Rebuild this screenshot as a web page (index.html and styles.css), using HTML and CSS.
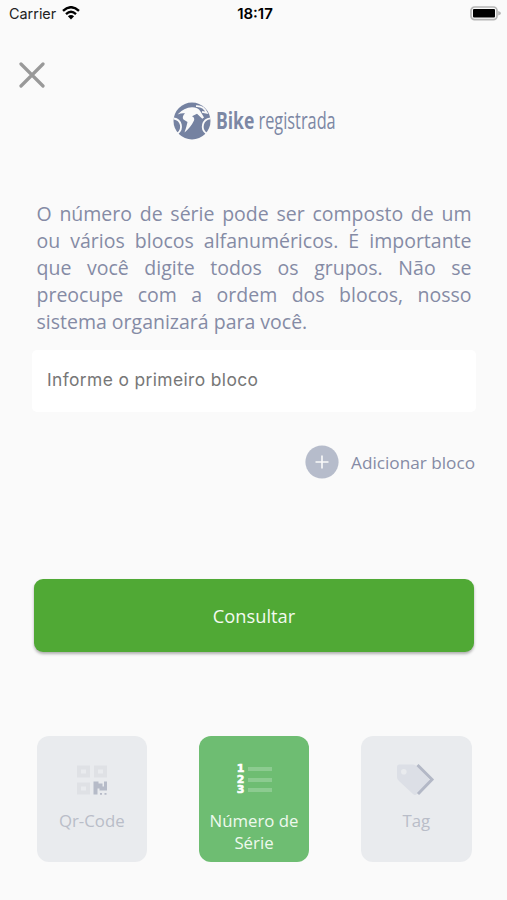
FILE: index.html
```html
<!DOCTYPE html>
<html lang="pt-BR">
<head>
  <meta charset="utf-8">
  <title>Bike Registrada</title>
  <link rel="stylesheet" href="styles.css">
</head>
<body>
  <div class="status-bar">
    <div class="carrier">
      <span>Carrier</span>
      <svg class="wifi" viewBox="0 0 18 14">
        <path d="M1 4.8 Q9 -2.4 17 4.8" />
        <path d="M4 8.1 Q9 3.6 14 8.1" />
        <path class="dot" d="M5.9 10.2 Q9 7.6 12.1 10.2 L9 13.4 Z" />
      </svg>
    </div>
    <span class="time">18:17</span>
    <svg class="battery" viewBox="0 0 31 15">
      <rect class="shell" x="1" y="1" width="26" height="12.6" rx="3.6" />
      <rect x="3" y="3" width="22" height="8.6" rx="1" />
      <path class="tip" d="M28.2 5 Q31 6 31 7.2 Q31 8.6 28.2 9.6 Z" />
    </svg>
  </div>

  <button class="close" aria-label="Fechar">
    <svg viewBox="0 0 26 26"><path d="M2 2 L24 24 M24 2 L2 24" /></svg>
  </button>

  <div class="logo">
    <svg viewBox="0 0 164 40">
      <circle class="disc" cx="19" cy="20" r="18.5" />
      <!-- wheels -->
      <path class="wheel" d="M1 17.5 A8.3 8.3 0 0 1 4.5 32.5" />
      <path class="wheel" d="M37.3 17.3 A8.3 8.3 0 0 0 33.5 32.5" />
      <!-- rider -->
      <path class="rider" d="M4.5 13.5 Q11 6.5 19 6.3 Q25 6.3 27.5 10.5 L31 16.5 L29.3 17.8 L24 12.8 L19 15.2 Q22 16.5 21 19.5 Q18 26 11.5 31.5 Q13.5 26 14.5 21 L10.5 18.5 Q8.5 16 12 12.3 Q8 12 4.5 13.5 Z" />
      <path class="helmet" d="M23 5.2 Q30.5 4.5 33.8 11.8 L29 10.8" />
    </svg>
    <svg class="logo-name" viewBox="0 0 122 40">
      <text class="bold" transform="translate(1 28) scale(0.73 1)">Bike</text>
      <text transform="translate(43.5 28) scale(0.68 1)">registrada</text>
    </svg>
  </div>

  <p class="info">O número de série pode ser composto de um ou vários blocos alfanuméricos. É importante que você digite todos os grupos. Não se preocupe com a ordem dos blocos, nosso sistema organizará para você.</p>

  <input class="block-input" type="text" placeholder="Informe o primeiro bloco">

  <div class="add-block">
    <svg viewBox="0 0 34 34">
      <circle cx="17" cy="17" r="16.6" />
      <path d="M10.5 17 H23.5 M17 10.5 V23.5" />
    </svg>
    <span>Adicionar bloco</span>
  </div>

  <button class="submit">Consultar</button>

  <div class="tabs">
    <div class="tab">
      <svg viewBox="0 0 42 34">
        <path class="qr-box" d="M8 4.5 h9 v8 h-9 z M25 4.5 h9 v8 h-9 z M8 21.5 h9 v8 h-9 z" />
        <path class="qr-part" d="M22.5 18.5 h5 v2 h4 v3 h1.5 v-5 h3 v9 h-7.5 v-2 h-2 v6 h-4 z M29 30 h2 v1.8 h-2 z M33.5 30 h2 v1.8 h-2 z" />
      </svg>
      <span>Qr-Code</span>
    </div>
    <div class="tab active">
      <div class="list-icon">
        <b>1</b><i></i>
        <b>2</b><i></i>
        <b>3</b><i></i>
      </div>
      <span>Número de Série</span>
    </div>
    <div class="tab">
      <svg viewBox="0 0 42 34">
        <path class="tag-body" d="M4 1.5 H18 Q20 1.5 21.5 3 L33 15 Q35 17 33 19 L22 31 Q20 33 18 31 L4 18 Q2 16.5 2 14 V4 Q2 1.5 4 1.5 Z" />
        <circle class="tag-hole" cx="8.8" cy="8.8" r="2.8" />
        <path class="tag-edge" d="M22.5 2 L37 16.5 L23 31" />
      </svg>
      <span>Tag</span>
    </div>
  </div>
</body>
</html>
```
FILE: styles.css
```css
* {
  box-sizing: border-box;
}

body {
  margin: 0;
  height: 900px;
  overflow: hidden;
  background-color: #fafafa;
  font-family: "Open Sans", sans-serif;
  color: #858ba5;
  display: flex;
  flex-direction: column;
}

svg {
  display: block;
  flex: none;
}

button {
  border: none;
  cursor: pointer;
}

/* Status bar */
.status-bar {
  display: grid;
  grid-template-columns: 1fr auto 1fr;
  align-items: center;
  height: 26px;
  padding: 0 6px 0 9px;
  font-family: Inter, sans-serif;
  font-size: 14.4px;
  color: #222;
}

.carrier {
  display: flex;
  align-items: center;
  gap: 6px;
}

.wifi {
  width: 18px;
  height: 14px;
  fill: none;
  stroke: #000;
  stroke-width: 2.4;
}

.wifi .dot {
  fill: #000;
  stroke: none;
}

.time {
  font-size: 15px;
  font-weight: 600;
  color: #000;
}

.battery {
  width: 31px;
  height: 15px;
  justify-self: end;
}

.battery .shell {
  fill: none;
  stroke: #b5b5b5;
  stroke-width: 1.7;
}

.battery .tip {
  fill: #b5b5b5;
}

/* Header */
.close {
  width: 26px;
  height: 26px;
  margin: 36px 0 0 19px;
  padding: 0;
  background: none;
}

.close path {
  fill: none;
  stroke: #999;
  stroke-width: 3.2;
  stroke-linecap: round;
}

.logo {
  display: flex;
  align-self: center;
  width: 164px;
  margin: 13px 0 0 2px;
}

.logo svg {
  width: 164px;
  height: 40px;
  margin-right: -122px;
}

.logo .logo-name {
  width: 122px;
  margin-right: 0;
}

.logo .disc {
  fill: #7582a1;
}

.logo .wheel {
  fill: none;
  stroke: #fafafa;
  stroke-width: 1.8;
}

.logo .rider {
  fill: #fafafa;
}

.logo .helmet {
  fill: none;
  stroke: #fafafa;
  stroke-width: 1.8;
}

.logo text {
  font-size: 24px;
  fill: #7c87a4;
}

.logo .bold {
  font-weight: 700;
}

/* Form */
.info {
  margin: 59px 35.5px 0 36.5px;
  font-size: 19.5px;
  line-height: 27px;
  text-align: justify;
}

.block-input {
  height: 62px;
  margin: 15px 31px 0 32px;
  padding: 0 15px 4px;
  border: none;
  border-radius: 5px;
  background-color: #fff;
  font-family: Inter, sans-serif;
  font-size: 17.4px;
  letter-spacing: 0.38px;
}

.block-input::placeholder {
  color: #777;
  opacity: 1;
}

.add-block {
  display: flex;
  align-items: center;
  align-self: flex-end;
  gap: 12px;
  margin: 33px 32px 0 0;
  font-size: 17.2px;
}

.add-block svg {
  width: 34px;
  height: 34px;
}

.add-block circle {
  fill: #b6bccb;
}

.add-block path {
  stroke: #fafafa;
  stroke-width: 1.6;
}

.submit {
  height: 73px;
  margin: 100px 33px 0 34px;
  border-radius: 9px;
  background-color: #50a935;
  box-shadow: 0 2px 3px rgba(0, 0, 0, 0.3);
  font-family: inherit;
  font-size: 18.3px;
  color: #f3faf0;
}

/* Bottom tabs */
.tabs {
  display: flex;
  justify-content: space-between;
  margin: 84px 35.5px 0 36.5px;
}

.tab {
  display: flex;
  flex-direction: column;
  align-items: center;
  width: 110.5px;
  height: 126px;
  padding-top: 27px;
  border-radius: 12px;
  background-color: #e9ebee;
  font-size: 16.8px;
  line-height: 22px;
  text-align: center;
  color: #b9bdc8;
}

.tab svg {
  width: 42px;
  height: 34px;
  margin-bottom: 13px;
}

.tab.active {
  background-color: #6ebd72;
  color: #eef9ee;
}

.qr-box {
  fill: none;
  stroke: #dfe1e5;
  stroke-width: 4;
}

.qr-part {
  fill: #b6bbc8;
}

.list-icon {
  display: grid;
  grid-template-columns: 8px 24px;
  grid-auto-rows: 10.5px;
  column-gap: 3px;
  align-items: center;
  height: 34px;
  padding-top: 1px;
  margin-bottom: 13px;
}

.list-icon b {
  font-family: "DejaVu Sans", sans-serif;
  font-size: 11px;
  line-height: 10.5px;
  color: #fff;
  -webkit-text-stroke: 0.6px #fff;
}

.list-icon i {
  height: 4px;
  background-color: #8ccb90;
}

.tag-body {
  fill: #dcdfe6;
}

.tag-hole {
  fill: #e9ebee;
}

.tag-edge {
  fill: none;
  stroke: #b3b8c6;
  stroke-width: 3;
}
```
